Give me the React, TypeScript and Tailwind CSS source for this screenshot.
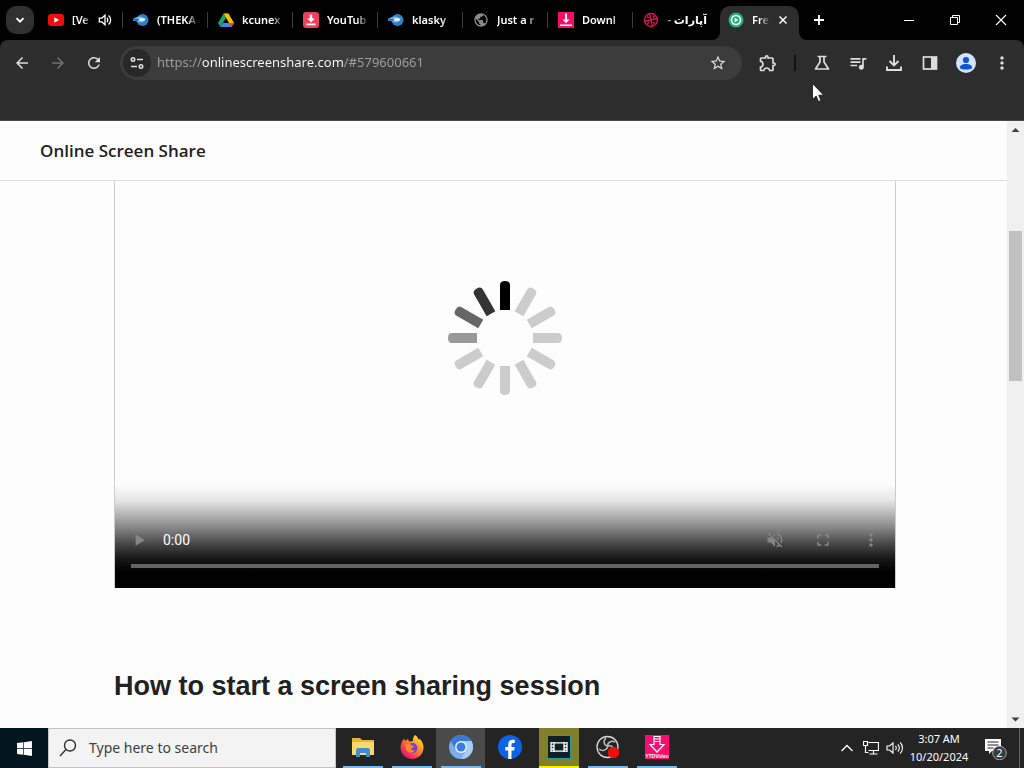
import type { ReactNode } from "react";
import { FaWindows } from "react-icons/fa";
import {
  MdArrowBack,
  MdArrowForward,
  MdFullscreen,
  MdMoreVert,
  MdOutlineExtension,
  MdPlayArrow,
  MdPublic,
  MdQueueMusic,
  MdRefresh,
  MdStarBorder,
  MdVolumeOff,
} from "react-icons/md";

function YouTubeIcon() {
  return (
    <svg viewBox="0 0 16 16" className="size-4">
      <rect x="0" y="2" width="16" height="12" rx="3" fill="#f00d0d" />
      <path d="M6.3 5.3v5.4L11 8z" fill="#fff" />
    </svg>
  );
}

function FishIcon() {
  return (
    <svg viewBox="0 0 16 16" className="size-4">
      <circle cx="9.500" cy="8" r="6" fill="#2f7fc4" />
      <path d="M0 7c3-2 6-3 9-2l4 2-3 3c-3 1-5 0-7-1L0 9z" fill="#6db8ee" />
      <path d="M0 6.500l6 .5-1 2-5-.5z" fill="#2b6cb0" />
      <ellipse cx="9" cy="7.600" rx="3" ry="1.500" fill="#e6f4ff" />
    </svg>
  );
}

function DriveIcon() {
  return (
    <svg viewBox="0 0 16 16" className="size-4">
      <path d="M5.500 1.500h5L8 6z" fill="#188038" />
      <path d="M5.500 1.500L0 11l2.500 4L8 6z" fill="#1ea362" />
      <path d="M10.500 1.500L16 11h-5L5.600 1.600z" fill="#fbbc04" />
      <path d="M5 11h11l-2.500 4h-11z" fill="#4285f4" />
      <path d="M11 11h5l-2.500 4z" fill="#ea4335" />
    </svg>
  );
}

function SaveIcon() {
  return (
    <svg viewBox="0 0 16 16" className="size-4">
      <rect width="16" height="16" rx="3" fill="#ee3f5c" />
      <path d="M6.800 2.500h2.400v4h2.600L8 10.500 4.200 6.500h2.600zM3.500 11.500h9v1.800h-9z" fill="#fff" />
    </svg>
  );
}

function PinkDownloadIcon() {
  return (
    <svg viewBox="0 0 16 16" className="size-4">
      <rect width="16" height="16" fill="#f80d62" />
      <path d="M7 1.500h2v6h2.500L8 11 4.500 7.500H7zM2 12.500h12V14H2z" fill="#fff" />
    </svg>
  );
}

function AparatIcon() {
  return (
    <svg viewBox="0 0 16 16" className="size-4" fill="none" stroke="#d4164f" strokeWidth="1.400">
      <circle cx="8" cy="8" r="6.500" />
      <path d="M8 8L6.500 1.700M8 8l6.300-1.500M8 8l1.500 6.300M8 8L1.700 9.500" />
      <path d="M4 4.500l2 1.500M11.500 4L10 6M12 11.500L10 10M4.500 12L6 10" />
    </svg>
  );
}

function ShareSiteIcon() {
  return (
    <svg viewBox="0 0 16 16" className="size-4">
      <circle cx="8" cy="8" r="7.500" fill="#20b37d" />
      <circle cx="8" cy="8" r="4.500" fill="none" stroke="#fff" strokeWidth="1.600" />
      <path d="M6.600 5.700v4.600L10.200 8z" fill="#fff" />
    </svg>
  );
}

function SpeakerIcon({ className }: { className: string }) {
  return (
    <svg viewBox="0 0 16 16" className={className} fill="none" stroke="currentColor" strokeWidth="1.500">
      <path d="M1.500 5.800h3L8 2.500v11L4.500 10.200h-3zM10.200 5.500c1.300 1.300 1.300 3.700 0 5M12 2.800c3.300 2.500 3.300 7.900 0 10.400" />
    </svg>
  );
}

type Tab = { title: string; icon: ReactNode; audio?: boolean; rtl?: boolean };

const tabs: Tab[] = [
  { title: "[Ve", icon: <YouTubeIcon />, audio: true },
  { title: "(THEKA", icon: <FishIcon /> },
  { title: "kcunex", icon: <DriveIcon /> },
  { title: "YouTub", icon: <SaveIcon /> },
  { title: "klasky", icon: <FishIcon /> },
  { title: "Just a r", icon: <MdPublic className="size-4 text-[#8a8a8a]" /> },
  { title: "Downl", icon: <PinkDownloadIcon /> },
  { title: "آپارات -", icon: <AparatIcon />, rtl: true },
];

function TabButton({ tab, last }: { tab: Tab; last: boolean }) {
  return (
    <button
      type="button"
      className={`flex h-4 w-[85px] shrink-0 items-center gap-2 pl-2.5 ${last ? "" : "border-r border-[#3d3d3d]"}`}
    >
      <span className="shrink-0">{tab.icon}</span>
      <span
        dir={tab.rtl ? "rtl" : "ltr"}
        className={
          tab.rtl
            ? "w-10 whitespace-nowrap text-right [mask-image:linear-gradient(to_left,black_80%,transparent_120%)]"
            : tab.audio
              ? "w-[18px] whitespace-nowrap text-left [mask-image:linear-gradient(to_right,black_60%,transparent_110%)]"
              : "w-[42px] whitespace-nowrap text-left [mask-image:linear-gradient(to_right,black_70%,transparent)]"
        }
      >
        {tab.title}
      </span>
      {tab.audio && <SpeakerIcon className="size-3.5 shrink-0" />}
    </button>
  );
}

function TabStrip() {
  return (
    <div className="flex h-10 shrink-0 items-center bg-black text-[11px] font-semibold text-white">
      <button
        type="button"
        aria-label="Search tabs"
        className="ml-1.5 flex size-7 shrink-0 items-center justify-center rounded-[10px] bg-[#303030]"
      >
        <svg viewBox="0 0 10 10" className="size-2.5" fill="none" stroke="currentColor" strokeWidth="1.800">
          <path d="M1.500 3.200L5 6.700l3.500-3.500" />
        </svg>
      </button>
      <nav className="ml-1 flex items-center">
        {tabs.map((tab, i) => (
          <TabButton key={i} tab={tab} last={i === tabs.length - 1} />
        ))}
      </nav>
      <div className="relative ml-0.5 flex h-[34px] w-[79px] shrink-0 items-center self-end rounded-t-[10px] bg-[#2d2d2d] pb-1.5 pl-2">
        <svg viewBox="0 0 8 8" className="absolute bottom-0 -left-2 size-2">
          <path d="M8 0v8H0a8 8 0 0 0 8-8z" fill="#2d2d2d" />
        </svg>
        <svg viewBox="0 0 8 8" className="absolute -right-2 bottom-0 size-2">
          <path d="M0 0v8h8a8 8 0 0 1-8-8z" fill="#2d2d2d" />
        </svg>
        <button type="button" className="flex items-center gap-2">
          <ShareSiteIcon />
          <span className="w-[18px] whitespace-nowrap text-left [mask-image:linear-gradient(to_right,black_40%,transparent)]">
            Fre
          </span>
        </button>
        <button type="button" aria-label="Close tab" className="ml-2">
          <svg viewBox="0 0 10 10" className="size-2.5" stroke="currentColor" strokeWidth="1.500">
            <path d="M1.500 1.500l7 7M8.500 1.500l-7 7" />
          </svg>
        </button>
      </div>
      <button type="button" aria-label="New tab" className="flex size-10 shrink-0 items-center justify-center">
        <svg viewBox="0 0 12 12" className="size-3" stroke="currentColor" strokeWidth="1.800">
          <path d="M6 1v10M1 6h10" />
        </svg>
      </button>
      <div className="ml-auto flex">
        <button type="button" aria-label="Minimize" className="flex h-10 w-[46px] items-center justify-center">
          <svg viewBox="0 0 10 10" className="size-2.5" stroke="currentColor">
            <path d="M0 5.500h10" />
          </svg>
        </button>
        <button type="button" aria-label="Restore" className="flex h-10 w-[46px] items-center justify-center">
          <svg viewBox="0 0 10 10" className="size-2.5" fill="none" stroke="currentColor">
            <path d="M.5 2.500h7v7h-7zM2.500 2.500v-2h7v7h-2" />
          </svg>
        </button>
        <button type="button" aria-label="Close" className="flex h-10 w-[46px] items-center justify-center">
          <svg viewBox="0 0 12 12" className="size-3" stroke="currentColor" strokeWidth="1.100">
            <path d="M1 1l10 10M11 1L1 11" />
          </svg>
        </button>
      </div>
    </div>
  );
}

function ToolButton({ label, children }: { label: string; children: ReactNode }) {
  return (
    <button type="button" aria-label={label} className="flex h-[34px] w-9 shrink-0 items-center justify-center">
      {children}
    </button>
  );
}

function Toolbar() {
  return (
    <div className="shrink-0 bg-black">
      <div className="flex h-[81px] items-start rounded-t-lg border-b border-[#4a4a4a] bg-[#2d2d2d] px-1 pt-1.5 text-[#dedede]">
        <ToolButton label="Back">
          <MdArrowBack className="size-[18px]" />
        </ToolButton>
        <ToolButton label="Forward">
          <MdArrowForward className="size-[18px] text-[#707070]" />
        </ToolButton>
        <ToolButton label="Reload">
          <MdRefresh className="size-[18px]" />
        </ToolButton>
        <div className="mx-2 flex h-[34px] min-w-0 flex-1 items-center rounded-full bg-[#3c3c3c] pl-[3px]">
          <button
            type="button"
            aria-label="Site information"
            className="flex size-7 shrink-0 items-center justify-center rounded-full bg-[#282828]"
          >
            <svg viewBox="0 0 14 14" className="size-3.5" fill="none" stroke="currentColor" strokeWidth="1.600">
              <circle cx="3" cy="3.500" r="1.700" />
              <path d="M7 3.500h6M1 10.500h6" />
              <circle cx="11" cy="10.500" r="1.700" />
            </svg>
          </button>
          <input
            aria-label="Address"
            type="text"
            defaultValue="https://onlinescreenshare.com/#579600661"
            className="ml-1.5 min-w-0 flex-1 bg-[linear-gradient(to_right,#a0a0a0_45px,#ffffff_45px,#ffffff_187px,#a0a0a0_187px)] bg-clip-text text-[13px] text-transparent outline-none"
          />
          <button type="button" aria-label="Bookmark" className="mr-1.5 flex size-9 items-center justify-center">
            <MdStarBorder className="size-[18px]" />
          </button>
        </div>
        <ToolButton label="Extensions">
          <MdOutlineExtension className="size-5" />
        </ToolButton>
        <span className="mx-2 mt-[9px] h-4 w-0.5 bg-[#111111]" />
        <ToolButton label="Experiments">
          <svg viewBox="0 0 16 16" className="size-4" fill="none" stroke="currentColor" strokeWidth="1.700">
            <path d="M3.500 1.500h9M6 1.500V7L1.500 14h13L10 7V1.500" strokeLinejoin="round" />
          </svg>
        </ToolButton>
        <ToolButton label="Media controls">
          <MdQueueMusic className="size-5" />
        </ToolButton>
        <ToolButton label="Downloads">
          <svg viewBox="0 0 18 18" className="size-[18px]" fill="none" stroke="currentColor" strokeWidth="1.900">
            <path d="M9 1v10M4.500 7L9 11.500 13.500 7M2 12.500V16h14v-3.500" />
          </svg>
        </ToolButton>
        <ToolButton label="Side panel">
          <svg viewBox="0 0 16 16" className="size-4">
            <rect x="1.500" y="2" width="13" height="12" fill="none" stroke="currentColor" strokeWidth="1.700" />
            <path d="M9 2h6v12H9z" fill="currentColor" />
          </svg>
        </ToolButton>
        <ToolButton label="Profile">
          <svg viewBox="0 0 20 20" className="size-5">
            <circle cx="10" cy="10" r="10" fill="#d3e3fd" />
            <circle cx="10" cy="7" r="3.100" fill="#0b57d0" />
            <path d="M3.800 15c0-2.700 2.500-4 6.200-4s6.200 1.300 6.200 4c-1.500 1-3.500 1.500-6.200 1.500S5.300 16 3.800 15z" fill="#0b57d0" />
          </svg>
        </ToolButton>
        <ToolButton label="Menu">
          <MdMoreVert className="size-5" />
        </ToolButton>
      </div>
    </div>
  );
}

const spokeColors = [
  "#000000", "#cccccc", "#cccccc", "#cccccc", "#cccccc", "#cccccc",
  "#cccccc", "#cccccc", "#cccccc", "#999999", "#666666", "#333333",
];

function Spinner() {
  return (
    <svg viewBox="-61 -61 122 122" className="size-[122px]">
      {spokeColors.map((color, i) => (
        <path
          key={i}
          d="M-5-28v-25q0-4 5-4t5 4v25z"
          fill={color}
          transform={`rotate(${i * 30})`}
        />
      ))}
    </svg>
  );
}

function VideoPlayer() {
  return (
    <figure className="flex h-[407px] flex-col items-center border-x border-[#cccccc] pt-24">
      <Spinner />
      <div className="mt-auto flex h-[104px] w-full flex-col bg-[linear-gradient(to_bottom,transparent,rgb(0_0_0/0.09)_16px,rgb(0_0_0/0.28)_30px,rgb(0_0_0/0.5)_46px,rgb(0_0_0/0.72)_60px,rgb(0_0_0/0.9)_74px,black_88px)] pt-8 text-[#858585]">
        <div className="flex h-12 items-center">
          <button type="button" aria-label="Play" className="flex w-12 justify-center">
            <MdPlayArrow className="size-5" />
          </button>
          <span className="font-[Roboto,sans-serif] text-sm text-white">0:00</span>
          <button type="button" aria-label="Unmute" className="ml-auto flex w-12 justify-center">
            <MdVolumeOff className="size-5" />
          </button>
          <button type="button" aria-label="Full screen" className="flex w-12 justify-center">
            <MdFullscreen className="size-5" />
          </button>
          <button type="button" aria-label="More options" className="flex w-12 justify-center">
            <MdMoreVert className="size-5" />
          </button>
        </div>
        <input
          type="range"
          aria-label="Playback position"
          defaultValue={0}
          className="mx-4 h-1 appearance-none bg-[#636363] [&::-webkit-slider-thumb]:size-0 [&::-webkit-slider-thumb]:appearance-none"
        />
      </div>
    </figure>
  );
}

function Scrollbar() {
  return (
    <div className="flex w-[17px] shrink-0 flex-col items-center bg-[#f0f0f0]">
      <svg viewBox="0 0 17 17" className="size-[17px]">
        <path d="M4.500 11h8l-4-4z" fill="#404040" />
      </svg>
      <div className="mt-[93px] h-[150px] w-[13px] bg-[#c1c1c1]" />
      <svg viewBox="0 0 17 17" className="mt-auto size-[17px]">
        <path d="M4.500 6.500h8l-4 4z" fill="#404040" />
      </svg>
    </div>
  );
}

type Task = { name: string; icon: ReactNode; state: "idle" | "running" | "active" | "alert" };

const tasks: Task[] = [
  {
    name: "File Explorer",
    state: "running",
    icon: (
      <svg viewBox="0 0 24 24" className="size-6">
        <path d="M1 3h8l2 2h12v15H1z" fill="#e8b43a" />
        <path d="M1 7h22v13H1z" fill="#ffd968" />
        <path d="M5 22v-7q0-2 2-2h10q2 0 2 2v7h-4v-4H9v4z" fill="#3f8fcf" />
      </svg>
    ),
  },
  {
    name: "Firefox",
    state: "running",
    icon: (
      <svg viewBox="0 0 24 24" className="size-6">
        <defs>
          <linearGradient id="fox" x1="0.9" y1="0.1" x2="0.2" y2="0.9">
            <stop offset="0" stopColor="#ffdf3c" />
            <stop offset="0.4" stopColor="#ff9025" />
            <stop offset="0.75" stopColor="#ff3f4f" />
            <stop offset="1" stopColor="#dd1774" />
          </linearGradient>
        </defs>
        <path
          d="M15 0c2 1 3 3 3.500 4.500L20 4c2.500 3 3.500 5.500 3.500 8.500C23.500 19 18.300 24 12 24S.5 19 .5 12.500C.5 9 2 6 4 3.500L5 6l3-2 1 2.500 4-.5c-.5-2.500.5-4.500 2-6z"
          fill="url(#fox)"
        />
        <circle cx="12.500" cy="13" r="5" fill="#7542d8" />
        <path d="M5 10c3-2 5-1 6 0l3 1c-1 2-3 2-3 3s2 2 4 1c-2 4-8 3-9-1z" fill="#ff8b22" />
      </svg>
    ),
  },
  {
    name: "Chromium",
    state: "active",
    icon: (
      <svg viewBox="0 0 24 24" className="size-6">
        <circle cx="12" cy="12" r="12" fill="#78aef0" />
        <path d="M12 6h10.400A12 12 0 0 0 1.600 6L7 15z" fill="#3d78d8" />
        <path d="M22.400 6A12 12 0 0 1 12 24l5.200-9A6 6 0 0 0 12 6z" fill="#a9cbf5" />
        <circle cx="12" cy="12" r="6" fill="#eef5ff" />
        <circle cx="12" cy="12" r="4.500" fill="#3a7ddd" />
      </svg>
    ),
  },
  {
    name: "Facebook",
    state: "idle",
    icon: (
      <svg viewBox="0 0 24 24" className="size-6">
        <circle cx="12" cy="12" r="12" fill="#0b63e5" />
        <path
          d="M10.200 24v-8.500H7.300V12h2.900V9.600c0-3.200 1.700-4.800 4.500-4.800 1.100 0 2.100.2 2.100.2v3h-1.600c-1.400 0-1.700.8-1.700 1.700V12h3.200l-.6 3.500h-2.600V24z"
          fill="#fff"
        />
      </svg>
    ),
  },
  {
    name: "Video editor",
    state: "alert",
    icon: (
      <svg viewBox="0 0 24 24" className="size-6">
        <rect x="0.500" y="0.500" width="23" height="23" fill="#102027" stroke="#2899a0" />
        <path
          d="M4 7v10M7 7v10M17 7v10M20 7v10M4 7.800h16M4 16.200h16M4 11h3M4 14h3M17 11h3M17 14h3"
          fill="none"
          stroke="#fff"
          strokeWidth="1.300"
        />
      </svg>
    ),
  },
  {
    name: "OBS Studio",
    state: "running",
    icon: (
      <svg viewBox="0 0 24 24" className="size-6">
        <circle cx="11.500" cy="12" r="10.500" fill="#242424" stroke="#d8d8d8" strokeWidth="1.300" />
        <path d="M10 3c-4 4-1 8 2 8 4-1 7 2 5 7M12 11c-1 4-5 6-9 3M12 11c-1-3 3-6 7-4" fill="none" stroke="#bdbdbd" strokeWidth="1.500" />
        <circle cx="17.500" cy="17.500" r="5.700" fill="#f20d0d" />
      </svg>
    ),
  },
  {
    name: "YTD Video",
    state: "running",
    icon: (
      <svg viewBox="0 0 24 24" className="size-6">
        <rect width="24" height="24" fill="#fa0c70" />
        <path d="M9 1.500h6v8h4L12 17 5 9.500h4zM9 4h6M9 6.500h6" fill="none" stroke="#fff" strokeWidth="1.200" />
        <text x="12" y="23" textAnchor="middle" fontSize="5" fontWeight="700" fontFamily="Liberation Sans, sans-serif" fill="#fff">
          YTDVideo
        </text>
      </svg>
    ),
  },
];

const taskStyles = {
  idle: "border-transparent",
  running: "border-[#76b9ed]",
  active: "border-[#76b9ed]",
  alert: "border-[#fff000] bg-[#80802a]",
};

function Taskbar() {
  return (
    <footer className="flex h-10 shrink-0 items-stretch bg-[#242424] text-white">
      <button type="button" aria-label="Start" className="flex w-12 shrink-0 items-center justify-center bg-[#03161f]">
        <FaWindows className="size-[17px]" />
      </button>
      <label className="flex w-72 shrink-0 items-center gap-3 border border-[#c4c4c4] bg-[#f3f3f3] pl-2.5 text-[#303030]">
        <svg viewBox="0 0 18 18" className="size-[18px] shrink-0" fill="none" stroke="currentColor" strokeWidth="1.400">
          <circle cx="11" cy="6.500" r="5.500" />
          <path d="M7 10.500L1 17" />
        </svg>
        <input
          type="text"
          aria-label="Search"
          placeholder="Type here to search"
          className="w-full min-w-0 bg-transparent text-sm outline-none placeholder:text-[#404040]"
        />
      </label>
      <div className="ml-0.5 flex">
        {tasks.map((task) => (
          <button
            key={task.name}
            type="button"
            aria-label={task.name}
            className={`flex w-[49px] justify-center ${task.state === "active" ? "bg-[#4a4a4a]" : ""}`}
          >
            <span className={`flex h-full w-10 items-center justify-center border-b-2 ${taskStyles[task.state]}`}>
              {task.icon}
            </span>
          </button>
        ))}
      </div>
      <div className="ml-auto flex items-center">
        <button type="button" aria-label="Show hidden icons" className="flex w-6 justify-center">
          <svg viewBox="0 0 12 12" className="size-3" fill="none" stroke="currentColor" strokeWidth="1.300">
            <path d="M.5 9L6 3.500 11.500 9" />
          </svg>
        </button>
        <button type="button" aria-label="Network" className="flex w-6 justify-center">
          <svg viewBox="0 0 16 16" className="size-4" fill="none" stroke="currentColor" strokeWidth="1.200">
            <path d="M5.500 2.500h10v8h-10M10.500 10.500v3M6.500 14h8M.5 1.500h4v4h-4zM2.500 5.500v7h3" />
          </svg>
        </button>
        <button type="button" aria-label="Volume" className="flex w-6 justify-center">
          <svg viewBox="0 0 18 16" className="h-4 w-[18px]" fill="none" stroke="currentColor" strokeWidth="1.100">
            <path d="M1 6h2.500L7 3v10l-3.500-3H1zM9.500 6c1 1 1 3 0 4M11.800 4.300c2 2 2 5.400 0 7.400M14.200 2.500c3 3 3 8 0 11" />
          </svg>
        </button>
        <time className="w-16 text-center text-[11px] leading-[18px]">
          3:07 AM
          <br />
          10/20/2024
        </time>
        <button type="button" aria-label="2 notifications" className="flex w-12 justify-center">
          <svg viewBox="0 0 24 24" className="size-6">
            <path d="M2 3h16v12H9l-3 3v-3H2z" fill="#fff" />
            <path d="M4.500 6h11M4.500 9h11M4.500 12h6" stroke="#242424" strokeWidth="1.200" />
            <circle cx="16.500" cy="17" r="6.800" fill="#3a3a3a" stroke="#a5a5a5" />
            <text x="16.500" y="21" textAnchor="middle" fontSize="11" fill="#fff">
              2
            </text>
          </svg>
        </button>
        <span className="mr-1 h-10 w-px bg-[#666666]" />
      </div>
    </footer>
  );
}

export default function App() {
  return (
    <div className="flex h-screen flex-col overflow-hidden bg-[#fdfdfd] font-['Noto_Sans','DejaVu_Sans',sans-serif]">
      <TabStrip />
      <Toolbar />
      <div className="flex min-h-0 flex-1">
        <main className="min-w-0 flex-1 overflow-hidden">
          <header className="flex h-[60px] items-center border-b border-[#dddddd] px-10">
            <a href="#home" className="font-['Open_Sans',sans-serif] text-[17px] font-semibold text-[#222222]">
              Online Screen Share
            </a>
          </header>
          <section className="pr-[111px] pl-[114px]">
            <VideoPlayer />
            <h2 className="mt-20 font-['Liberation_Sans',sans-serif] text-[27px] leading-9 font-bold text-[#212121]">
              How to start a screen sharing session
            </h2>
          </section>
        </main>
        <Scrollbar />
      </div>
      <Taskbar />
      <svg viewBox="0 0 12 19" className="pointer-events-none absolute top-[83px] left-[812px] h-[19px] w-3">
        <path d="M.5.5v16l3.700-3.500 2.300 5.500 2.500-1-2.300-5.300h5z" fill="#fff" stroke="#111" strokeWidth="0.800" />
      </svg>
    </div>
  );
}
